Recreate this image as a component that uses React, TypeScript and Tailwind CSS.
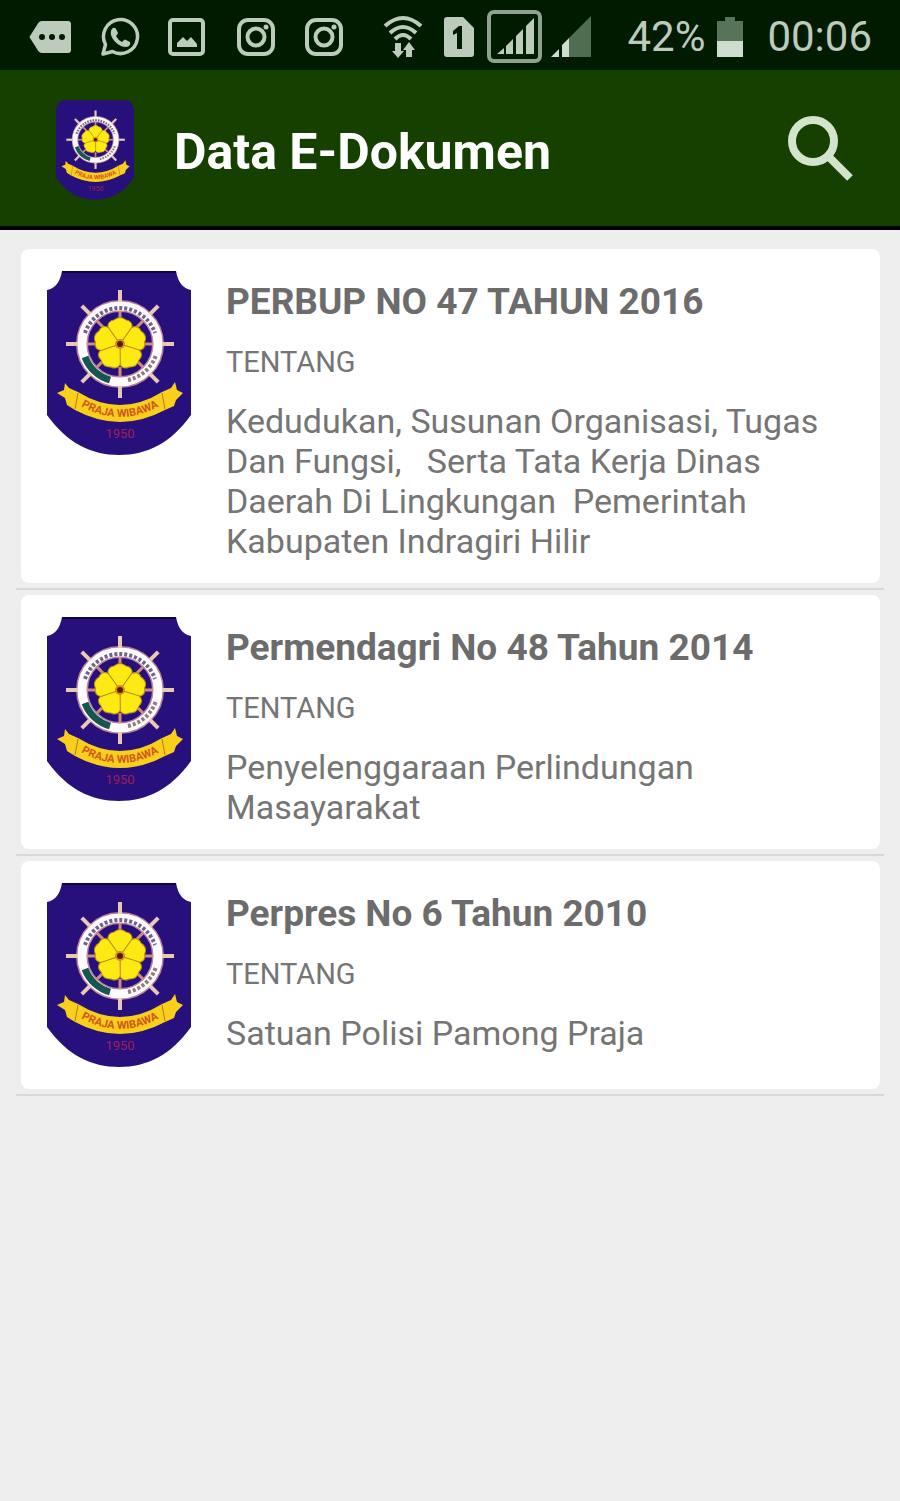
import { useId } from "react";

const documents = [
  {
    title: "PERBUP NO 47 TAHUN 2016",
    about:
      "Kedudukan, Susunan Organisasi, Tugas Dan Fungsi,   Serta Tata Kerja Dinas Daerah Di Lingkungan  Pemerintah Kabupaten Indragiri Hilir",
  },
  {
    title: "Permendagri No 48 Tahun 2014",
    about: "Penyelenggaraan Perlindungan Masayarakat",
  },
  {
    title: "Perpres No 6 Tahun 2010",
    about: "Satuan Polisi Pamong Praja",
  },
];

function Emblem({ className, rounded }: { className: string; rounded?: boolean }) {
  const curve = useId();
  const petals = [0, 72, 144, 216, 288];
  const spokes = [0, 45, 90, 135, 180, 225, 270, 315];

  return (
    <svg viewBox="0 0 144 184" className={className} role="img" aria-label="Praja Wibawa">
      <path
        d={
          rounded
            ? "M16 0H128Q144 1 144 20V142C126 172 100 184 72 184C44 184 18 172 0 142V20Q0 1 16 0Z"
            : "M15 0H129Q132 17 144 19V144C124 172 100 184 72 184C44 184 20 172 0 144V19Q12 17 15 0Z"
        }
        fill="#27107c"
      />
      {!rounded && <path d="M15 1H129" stroke="#0c0548" strokeWidth="2" />}
      {/* ship's wheel */}
      <circle cx="73" cy="73" r="38" fill="none" stroke="#b9829c" strokeWidth="12" />
      <circle cx="73" cy="73" r="38" fill="none" stroke="#fdfbfd" strokeWidth="9" />
      <path
        d="M38 62A37 37 0 0 1 108 62"
        fill="none"
        stroke="#6d6488"
        strokeWidth="4"
        strokeDasharray="3 2"
      />
      <path d="M38 86A38 38 0 0 0 63 109" fill="none" stroke="#16564e" strokeWidth="7" />
      <path
        d="M81 109A38 38 0 0 0 109 84"
        fill="none"
        stroke="#8d7f78"
        strokeWidth="4"
        strokeDasharray="3 2"
      />
      {spokes.map((deg) => (
        <g key={deg} transform={`rotate(${deg} 73 73)`}>
          <path d="M73 31V19" stroke="#e8c9b4" strokeWidth="4" />
          <path d="M73 50V40" stroke="#d08a86" strokeWidth="3" />
        </g>
      ))}
      {/* flower */}
      {petals.map((deg) => (
        <path
          key={deg}
          d="M73 73L61 57Q60 50 67 49Q73 44 79 49Q86 50 85 57Z"
          fill="#fdea12"
          stroke="#b98c12"
          strokeWidth="1"
          transform={`rotate(${deg} 73 73)`}
        />
      ))}
      <circle cx="73" cy="73" r="4" fill="#4a2418" stroke="#e0862a" strokeWidth="2" />
      {/* ribbon */}
      <path
        d="M18 112L22 117L31 121Q73 147 115 121L124 117L128 111L130 119L136 122L129 129L127 135L118 139Q73 163 28 139L20 134L18 127L10 122L17 119Z"
        fill="#f9cf1c"
      />
      <path
        d="M31 122L28 138M115 122L118 138"
        stroke="#b77a15"
        strokeWidth="1"
      />
      <path id={curve} d="M27 131Q73 161 119 131" fill="none" />
      <text
        fill="#d0571c"
        textAnchor="middle"
        className="font-['Roboto',sans-serif] text-[11px] font-bold"
      >
        <textPath href={`#${curve}`} startOffset="50%">
          PRAJA WIBAWA
        </textPath>
      </text>
      <text
        x="73"
        y="167"
        fill="#a01f55"
        textAnchor="middle"
        className="font-['Roboto',sans-serif] text-[13px]"
      >
        1950
      </text>
    </svg>
  );
}

function InstagramIcon() {
  return (
    <svg viewBox="0 0 40 40" className="size-10" fill="none" stroke="currentColor">
      <rect x="3" y="3" width="34" height="34" rx="9" strokeWidth="4" />
      <circle cx="20" cy="20" r="8.5" strokeWidth="4" />
      <circle cx="30" cy="10" r="2.5" fill="currentColor" stroke="none" />
    </svg>
  );
}

function StatusBar() {
  return (
    <div className="flex h-[70px] items-center justify-between bg-[#001b00] px-7 pt-1 text-[#bccbbb]">
      <div className="flex items-center gap-7">
        <svg viewBox="0 0 44 34" className="h-[34px] w-11">
          <path d="M14 1H40Q43 1 43 4V30Q43 33 40 33H14Q11 33 9 29L2 18Q1 17 2 16L9 5Q11 1 14 1Z" fill="currentColor" />
          <g fill="#001b00">
            <circle cx="14" cy="17" r="3" />
            <circle cx="24" cy="17" r="3" />
            <circle cx="34" cy="17" r="3" />
          </g>
        </svg>
        <svg viewBox="0 0 40 40" className="size-10">
          <path
            d="M3 37L5.500 27.500A17 17 0 1 1 12.500 34.500Z"
            fill="none"
            stroke="currentColor"
            strokeWidth="3.500"
            strokeLinejoin="round"
          />
          <path
            d="M13 11Q15 10 16 12L18 16Q18 17 16 19Q18 23 22 25L24 23Q25 22 26 23L30 25Q31 27 29 29Q26 31 21 29Q13 25 11 18Q10 13 13 11Z"
            fill="currentColor"
          />
        </svg>
        <svg viewBox="0 0 40 40" className="size-10">
          <rect x="2" y="3" width="33" height="34" rx="3" fill="none" stroke="currentColor" strokeWidth="4" />
          <path d="M9 30V26L15 20L19 24L23 20L29 27V30Z" fill="currentColor" />
        </svg>
        <InstagramIcon />
        <InstagramIcon />
      </div>

      <div className="flex items-center">
        <svg viewBox="0 0 40 44" className="mr-5 h-11 w-10" fill="none" stroke="currentColor" strokeWidth="4">
          <path d="M2 11Q20 -5 38 11M7 18Q20 6 33 18M12 24Q20 16 28 24" />
          <g fill="currentColor" stroke="none">
            <path d="M12 28H18V36H21L15 43L9 36H12Z" />
            <path d="M23 42H29V35H32L26 27L20 35H23Z" />
          </g>
        </svg>
        <svg viewBox="0 0 32 42" className="mr-3 h-[42px] w-8">
          <path d="M4 1H20L31 12V38Q31 41 28 41H4Q1 41 1 38V4Q1 1 4 1Z" fill="currentColor" />
          <path d="M10 15L16 10H19V33H14V17L10 19Z" fill="#001b00" />
        </svg>
        <svg viewBox="0 0 56 54" className="mr-2 h-[54px] w-14">
          <rect x="2" y="2" width="51" height="49" rx="5" fill="none" stroke="#8fa28f" strokeWidth="4" />
          <path d="M10 44L17 38V44ZM19 44V36L26 29V44ZM29 44V26L36 19V44ZM39 44V16L47 8V44Z" fill="currentColor" />
        </svg>
        <svg viewBox="0 0 40 42" className="mr-9 h-[42px] w-10">
          <path d="M18 22L40 0V41H18Z" fill="#4f6d50" />
          <path d="M0 41L8 33V41ZM11 41V29L18 22V41Z" fill="#cfdccf" />
        </svg>
        <span className="mr-3 text-[42px] leading-[50px]">42%</span>
        <svg viewBox="0 0 26 42" className="mr-6 h-[42px] w-[26px]">
          <path d="M0 5H8V1H18V5H26V25H0Z" fill="#57735a" />
          <path d="M0 25H26V41H0Z" fill="#d0dccf" />
        </svg>
        <span className="text-[42px] leading-[50px]">00:06</span>
      </div>
    </div>
  );
}

export default function App() {
  return (
    <div className="min-h-screen bg-[#eeeeee] font-['Roboto',sans-serif]">
      <StatusBar />

      <header className="flex h-[160px] items-center border-b-4 border-black bg-[#164000] pt-1 pr-11 pl-14">
        <Emblem rounded className="h-[100px] w-[78px]" />
        <h1 className="ml-10 flex-1 pt-1 text-[50px] leading-[60px] font-bold text-white">Data E-Dokumen</h1>
        <button type="button" aria-label="Cari">
          <svg viewBox="0 0 70 70" className="size-[70px]" fill="none" stroke="#d3e3cc">
            <circle cx="27" cy="26" r="21" strokeWidth="8" />
            <path d="M43 42L64 63" strokeWidth="8" />
          </svg>
        </button>
      </header>

      <main className="px-4 pt-[19px]">
        <ul>
          {documents.map((doc) => (
            <li key={doc.title} className="mb-[5px] border-b-2 border-[#d8d8d8] pb-[5px]">
              <article className="mr-1 ml-[5px] flex items-start rounded-lg bg-white pr-9 pl-[26px]">
                <Emblem className="my-[22px] h-[184px] w-36 shrink-0" />
                <div className="ml-[35px] pt-8 pb-[22px] text-[#757575]">
                  <h2 className="text-[37px] leading-[42px] font-bold text-[#6c6c6c]">{doc.title}</h2>
                  <p className="mt-[22px] text-[29px] leading-[34px]">TENTANG</p>
                  <p className="mt-[22px] text-[34px] leading-10 whitespace-pre-wrap">{doc.about}</p>
                </div>
              </article>
            </li>
          ))}
        </ul>
      </main>
    </div>
  );
}
